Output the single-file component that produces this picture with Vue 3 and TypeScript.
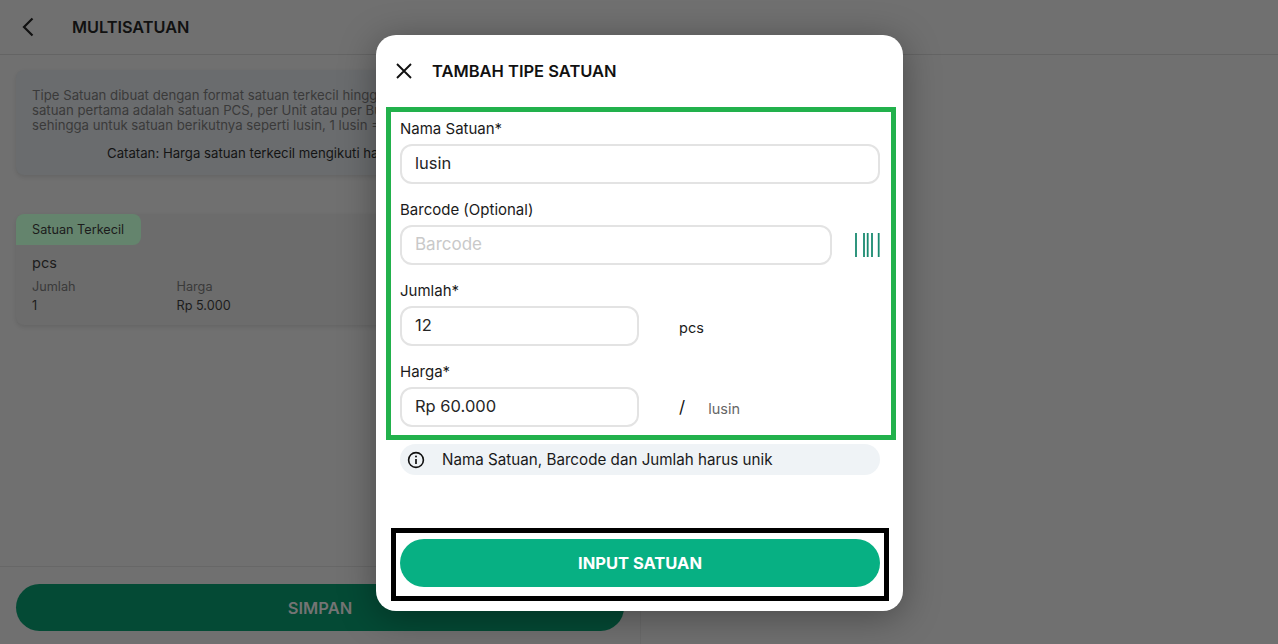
<script setup lang="ts">
const form = {
  name: "lusin",
  qty: "12",
  price: "Rp 60.000",
};
</script>

<template>
  <div class="page">
    <header class="topbar">
      <svg class="back" width="12" height="20" viewBox="0 0 12 20" fill="none">
        <path d="M10.5 1.5L2 10l8.5 8.5" stroke="#111" stroke-width="2.2" />
      </svg>
      <h1>MULTISATUAN</h1>
    </header>

    <main class="panel">
      <div class="content">
        <section class="intro">
          <p>Tipe Satuan dibuat dengan format satuan terkecil hingga</p>
          <p>satuan pertama adalah satuan PCS, per Unit atau per Buah</p>
          <p>sehingga untuk satuan berikutnya seperti lusin, 1 lusin = 12</p>
          <p class="note">Catatan: Harga satuan terkecil mengikuti harga</p>
        </section>

        <section class="unit">
          <div class="tab">Satuan Terkecil</div>
          <div class="unit-body">
            <div class="unit-name">pcs</div>
            <div class="unit-cols">
              <div class="col">
                <span class="muted">Jumlah</span>
                <span>1</span>
              </div>
              <div class="col">
                <span class="muted">Harga</span>
                <span>Rp 5.000</span>
              </div>
            </div>
          </div>
        </section>
      </div>

      <footer class="footer">
        <button class="save">SIMPAN</button>
      </footer>
    </main>

    <div class="modal">
      <div class="modal-head">
        <svg width="18" height="18" viewBox="0 0 18 18" fill="none">
          <path d="M2 2l14 14M16 2L2 16" stroke="#111" stroke-width="1.9" />
        </svg>
        <h2>TAMBAH TIPE SATUAN</h2>
      </div>

      <div class="form-box">
        <div class="field">
          <div class="label">Nama Satuan*</div>
          <div class="input">{{ form.name }}</div>
        </div>

        <div class="field">
          <div class="label">Barcode (Optional)</div>
          <div class="row">
            <div class="input grow placeholder">Barcode</div>
            <svg class="barcode" width="26" height="26" viewBox="0 0 26 26" fill="none">
              <path d="M2 1v24M10 1v24M13.7 1v24M18 1v24M24.7 1v24" stroke="#1a8a70" stroke-width="1.8" />
            </svg>
          </div>
        </div>

        <div class="field">
          <div class="label">Jumlah*</div>
          <div class="row">
            <div class="input short">{{ form.qty }}</div>
            <span class="suffix">pcs</span>
          </div>
        </div>

        <div class="field">
          <div class="label">Harga*</div>
          <div class="row">
            <div class="input short">{{ form.price }}</div>
            <span class="slash">/</span>
            <span class="per">{{ form.name }}</span>
          </div>
        </div>
      </div>

      <div class="hint">
        <svg width="18" height="18" viewBox="0 0 18 18" fill="none">
          <circle cx="9" cy="9" r="7.4" stroke="#111" stroke-width="1.6" />
          <path d="M9 8v5" stroke="#111" stroke-width="1.7" />
          <circle cx="9" cy="5.4" r="1" fill="#111" />
        </svg>
        <span>Nama Satuan, Barcode dan Jumlah harus unik</span>
      </div>

      <div class="submit-box">
        <button class="submit">INPUT SATUAN</button>
      </div>
    </div>
  </div>
</template>

<style>
html,
body {
  margin: 0;
  overflow: hidden;
}
</style>

<style scoped>
.page {
  position: relative;
  width: 1278px;
  height: 644px;
  overflow: hidden;
  background: #707070;
  font-family: Inter, "Liberation Sans", sans-serif;
  color: #111;
}

.topbar {
  height: 54px;
  border-bottom: 1px solid #646464;
  display: flex;
  align-items: center;
  padding-left: 22px;
  gap: 38px;
}

.topbar h1 {
  margin: 0;
  font-size: 16.3px;
  font-weight: 600;
}

.panel {
  width: 641px;
  height: 589px;
  box-sizing: border-box;
  border-right: 1px solid #6a6a6a;
  display: flex;
  flex-direction: column;
}

.content {
  flex: 1;
  padding: 15px 16px 0;
}

.intro {
  height: 105px;
  box-sizing: border-box;
  padding: 18px 16px 0;
  background: #6a6c6e;
  border-radius: 8px;
  box-shadow: 0 2px 4px rgba(0, 0, 0, 0.1);
  font-size: 13.2px;
  line-height: 15px;
  color: #3a3a3a;
}

.intro p {
  margin: 0;
  white-space: nowrap;
}

.intro .note {
  margin: 13px 0 0 75px;
  color: #141414;
}

.unit {
  margin-top: 39px;
  height: 111px;
  background: #6c6c6c;
  border-radius: 8px;
  box-shadow: 0 2px 4px rgba(0, 0, 0, 0.1);
  font-size: 12.7px;
  color: #1c1c1c;
}

.tab {
  width: 125px;
  height: 31px;
  box-sizing: border-box;
  padding-left: 16px;
  display: flex;
  align-items: center;
  background: #64846d;
  border-radius: 8px 8px 8px 0;
}

.unit-body {
  padding: 8px 16px 0;
}

.unit-name {
  font-size: 14.5px;
  line-height: 20px;
}

.unit-cols {
  display: flex;
  margin-top: 4px;
}

.col {
  width: 144.5px;
  display: flex;
  flex-direction: column;
  line-height: 19px;
}

.muted {
  color: #3a3a3a;
}

.footer {
  height: 78px;
  box-sizing: border-box;
  border-top: 1px solid #676767;
  padding: 17px 16px 0;
}

.save {
  width: 100%;
  height: 47px;
  border: 0;
  border-radius: 24px;
  background: #044a35;
  color: #747474;
  font-family: inherit;
  font-size: 16.5px;
  font-weight: 600;
}

.modal {
  position: absolute;
  left: 376px;
  top: 35px;
  width: 527px;
  height: 576px;
  box-sizing: border-box;
  background: #fff;
  border-radius: 20px;
  box-shadow: 0 6px 36px rgba(0, 0, 0, 0.35);
  display: flex;
  flex-direction: column;
}

.modal-head {
  height: 72px;
  display: flex;
  align-items: center;
  padding-left: 19px;
  gap: 19px;
}

.modal-head h2 {
  margin: 0;
  font-size: 16.5px;
  font-weight: 600;
}

.form-box {
  margin-left: 10px;
  width: 510px;
  height: 333px;
  box-sizing: border-box;
  border: 5px solid #22b14c;
  padding: 3px 9px 0;
  display: flex;
  flex-direction: column;
  gap: 8px;
}

.field {
  height: 73px;
}

.label {
  height: 29px;
  line-height: 27px;
  font-size: 15px;
  color: #1a1a1a;
}

.row {
  display: flex;
  align-items: center;
}

.input {
  width: 480px;
  height: 40px;
  box-sizing: border-box;
  border: 2px solid #e3e3e3;
  border-radius: 12px;
  padding: 0 0 2px 13px;
  display: flex;
  align-items: center;
  font-size: 16.5px;
  color: #262626;
  background: #fff;
}

.grow {
  width: 432px;
}

.short {
  width: 239px;
}

.placeholder {
  font-size: 17px;
  color: #c9c9c9;
}

.barcode {
  margin-left: 22px;
}

.suffix {
  margin-left: 40px;
  margin-top: 2px;
  font-size: 14.5px;
  color: #1c1c1c;
}

.slash {
  margin-left: 40px;
  font-size: 17px;
}

.per {
  margin-left: 23px;
  margin-top: 2px;
  font-size: 14.5px;
  color: #666;
}

.hint {
  margin: 4px 0 0 24px;
  width: 480px;
  height: 31px;
  box-sizing: border-box;
  background: #eff3f6;
  border-radius: 16px;
  padding-left: 7px;
  display: flex;
  align-items: center;
  gap: 17px;
  font-size: 15.2px;
  color: #1a1a1a;
}

.submit-box {
  margin: 53px 0 0 15px;
  width: 498px;
  height: 73px;
  box-sizing: border-box;
  border: 5px solid #000;
  padding: 6px 4px 0;
}

.submit {
  display: block;
  width: 480px;
  height: 48px;
  border: 0;
  border-radius: 24px;
  background: #07b083;
  color: #fff;
  font-family: inherit;
  font-size: 16.5px;
  font-weight: 700;
}
</style>
